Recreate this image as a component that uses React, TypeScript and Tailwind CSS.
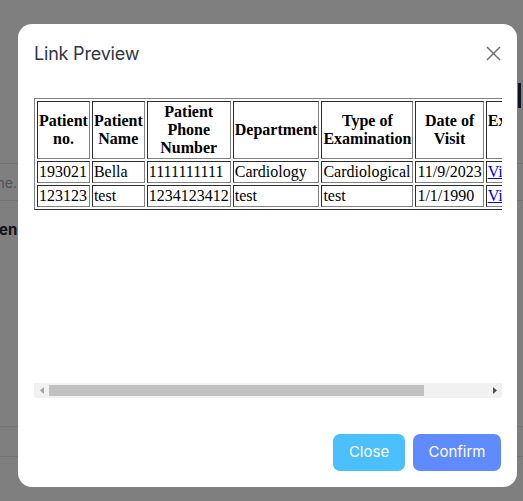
import React from 'react';

const rows = [
  { no: '193021', name: 'Bella', phone: '1111111111', dept: 'Cardiology', type: 'Cardiological', date: '11/9/2023' },
  { no: '123123', name: 'test', phone: '1234123412', dept: 'test', type: 'test', date: '1/1/1990' },
];

const headers = ['Patient no.', 'Patient Name', 'Patient Phone Number', 'Department', 'Type of Examination', 'Date of Visit', 'Examination Results'];

function Cell({ children, head }: { children: React.ReactNode; head?: boolean }) {
  if (head) {
    return (
      <th className="border border-[#808080] [border-style:inset] p-[1px] font-bold text-center align-middle">
        {children}
      </th>
    );
  }
  return <td className="border border-[#808080] [border-style:inset] p-[1px] text-left align-middle">{children}</td>;
}

function PreviewTable() {
  return (
    <div className="w-[468px] h-[285px] overflow-hidden bg-white">
      <table className="border-separate border-spacing-[2px] border border-[#808080] [border-style:outset] font-['Liberation_Serif','Times_New_Roman',serif] text-[16px] leading-[18px] text-black">
        <thead>
          <tr>
            {headers.map((h) => (
              <Cell key={h} head>{h}</Cell>
            ))}
          </tr>
        </thead>
        <tbody>
          {rows.map((r) => (
            <tr key={r.no}>
              <Cell>{r.no}</Cell>
              <Cell>{r.name}</Cell>
              <Cell>{r.phone}</Cell>
              <Cell>{r.dept}</Cell>
              <Cell>{r.type}</Cell>
              <Cell>{r.date}</Cell>
              <Cell>
                <a href="#" className="text-[#0000ee] underline">View</a>
              </Cell>
            </tr>
          ))}
        </tbody>
      </table>
    </div>
  );
}

function FakeScrollbar() {
  return (
    <div className="flex items-center w-[468px] h-[15px] bg-[#f1f1f1]">
      <div className="w-[15px] h-[15px] flex items-center justify-center">
        <svg width="4" height="7" viewBox="0 0 4 7"><path d="M4 0 L0 3.5 L4 7 Z" fill="#a3a3a3" /></svg>
      </div>
      <div className="flex-1 h-[15px] py-[2px]">
        <div className="w-[375px] h-full bg-[#c1c1c1]" />
      </div>
      <div className="w-[15px] h-[15px] flex items-center justify-center">
        <svg width="4" height="7" viewBox="0 0 4 7"><path d="M0 0 L4 3.5 L0 7 Z" fill="#505050" /></svg>
      </div>
    </div>
  );
}

export default function App() {
  return (
    <div className="relative w-[523px] h-[501px] overflow-hidden bg-white font-['Inter','Noto_Sans',sans-serif]">
      {/* page behind the dialog */}
      <div className="flex flex-col">
        <div className="h-[83px]" />
        <div className="flex justify-end h-[80px]">
          <div className="w-[3px] h-[25px] bg-[#1e293b] mr-[2px]" />
        </div>
        <div className="border-t border-[#e5e7eb] h-[37px] flex items-center">
          <span className="ml-[-26px] text-[14px] text-[#9ca3af]">Name...</span>
        </div>
        <div className="border-t border-[#e5e7eb] h-[226px] pt-[16px]">
          <span className="ml-[-22px] text-[15px] font-bold text-[#1f2937]">Open</span>
        </div>
        <div className="border-t border-[#e5e7eb] h-[30px]" />
        <div className="border-t border-[#e5e7eb] h-[40px]" />
      </div>

      <div className="fixed inset-0 bg-black/50" />

      <div className="absolute left-[18px] top-[24px] w-[499px] h-[463px] bg-white rounded-[14px] flex flex-col">
        <div className="h-[58px] px-4 flex items-center justify-between">
          <h2 className="text-[18px] text-[#2d3748] tracking-[-0.2px]">Link Preview</h2>
          <button className="w-[16px] h-[16px] flex items-center justify-center">
            <svg width="15" height="15" viewBox="0 0 15 15" fill="none" stroke="#6f6f6f" strokeWidth="1.5">
              <path d="M1 1 L14 14 M14 1 L1 14" />
            </svg>
          </button>
        </div>
        <div className="px-4 pt-4">
          <PreviewTable />
          <FakeScrollbar />
        </div>
        <div className="mt-auto px-4 pb-4 flex justify-end gap-2">
          <button className="w-[72px] h-[37px] rounded-[7px] bg-[#4bbfff] text-white text-[15px]">Close</button>
          <button className="w-[88px] h-[37px] rounded-[7px] bg-[#5f8bff] text-white text-[15px]">Confirm</button>
        </div>
      </div>
    </div>
  );
}
